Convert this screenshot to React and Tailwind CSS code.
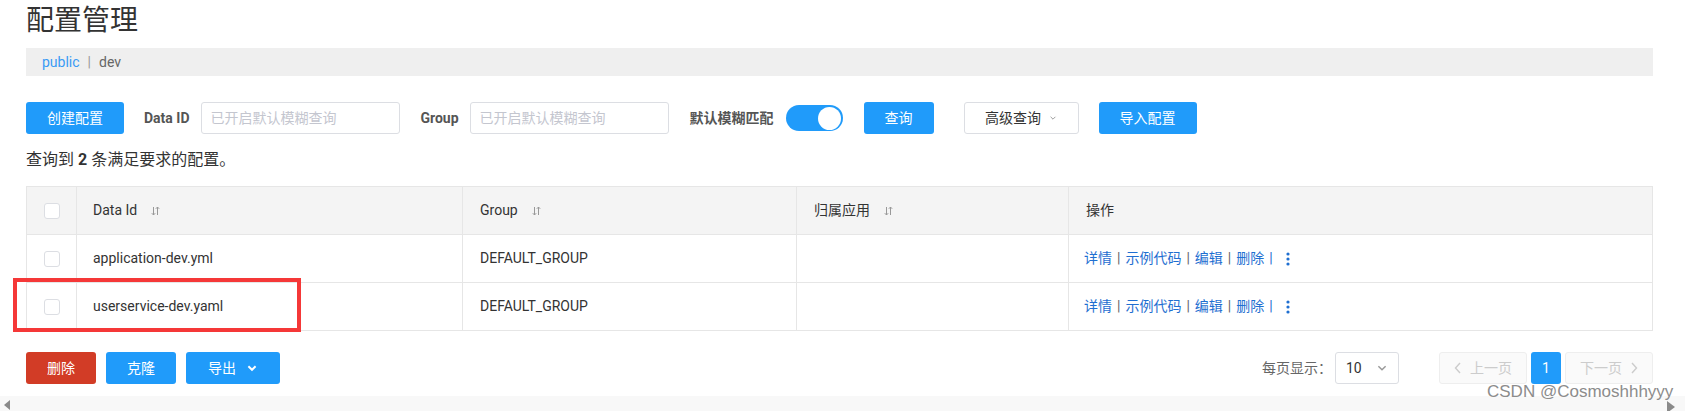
import React from "react";

const SortIcon = () => (
  <svg width="9" height="10" viewBox="0 0 9 10" className="ml-[14px] inline-block" fill="none" stroke="#999" strokeWidth="1">
    <path d="M2.5 1v8M0.8 7.2l1.7 1.8 1.7-1.8" />
    <path d="M6.5 9V1M4.8 2.8l1.7-1.8 1.7 1.8" />
  </svg>
);

const Checkbox = () => (
  <div className="mx-auto h-[16px] w-[16px] rounded-[3px] border border-[#dcdee3] bg-white" />
);

const Chevron = ({ color = "#999", size = 10, sw = 1.2 }) => (
  <svg width={size} height={size} viewBox="0 0 10 10" fill="none" stroke={color} strokeWidth={sw}>
    <path d="M2 3.5l3 3 3-3" />
  </svg>
);

const Actions = () => (
  <div className="flex items-center text-[14px] text-[#1f6fd1]">
    <span>详情</span>
    <span className="mx-[5px] text-[#666]">|</span>
    <span>示例代码</span>
    <span className="mx-[5px] text-[#666]">|</span>
    <span>编辑</span>
    <span className="mx-[5px] text-[#666]">|</span>
    <span>删除</span>
    <span className="ml-[5px] text-[#1f6fd1]">|</span>
    <svg width="4" height="14" viewBox="0 0 4 14" className="ml-[13px]" fill="#1f6fd1">
      <circle cx="2" cy="2" r="1.6" />
      <circle cx="2" cy="7" r="1.6" />
      <circle cx="2" cy="12" r="1.6" />
    </svg>
  </div>
);

export default function App() {
  const rows = ["application-dev.yml", "userservice-dev.yaml"];
  return (
    <div className="relative h-[411px] w-[1685px] overflow-hidden bg-white font-[Roboto,'Noto_Sans_CJK_SC',sans-serif] text-[#333]">
      <div className="pl-[26px] pr-[32px]">
        <h1 className="h-[42px] text-[28px] leading-[42px] font-normal text-[#333]">配置管理</h1>
        <div className="mt-[6px] flex h-[28px] items-center bg-[#efefef] pl-[16px] text-[14px]">
          <span className="text-[#3a9bf5]">public</span>
          <span className="mx-[8px] text-[#999]">|</span>
          <span className="text-[#666]">dev</span>
        </div>

        <div className="mt-[26px] flex h-[32px] items-center text-[14px]">
          <button className="h-[32px] w-[98px] rounded-[3px] bg-[#209bfa] text-white">创建配置</button>
          <span className="ml-[20px] font-bold text-[#555]">Data ID</span>
          <div className="ml-[11px] flex h-[32px] w-[199px] items-center rounded-[3px] border border-[#dcdee3] pl-[9px] text-[#c4c6cf]">已开启默认模糊查询</div>
          <span className="ml-[21px] font-bold text-[#555]">Group</span>
          <div className="ml-[11px] flex h-[32px] w-[199px] items-center rounded-[3px] border border-[#dcdee3] pl-[9px] text-[#c4c6cf]">已开启默认模糊查询</div>
          <span className="ml-[21px] font-bold text-[#555]">默认模糊匹配</span>
          <div className="ml-[12px] flex h-[26px] w-[57px] items-center justify-end rounded-full bg-[#209bfa] pr-[2px]">
            <div className="h-[23px] w-[23px] rounded-full bg-white" />
          </div>
          <button className="ml-[21px] h-[32px] w-[70px] rounded-[3px] bg-[#209bfa] text-white">查询</button>
          <button className="ml-[30px] flex h-[32px] w-[115px] items-center justify-center gap-[8px] rounded-[3px] border border-[#dcdee3] bg-white text-[#333]">
            <span>高级查询</span>
            <Chevron size={8} />
          </button>
          <button className="ml-[20px] h-[32px] w-[98px] rounded-[3px] bg-[#209bfa] text-white">导入配置</button>
        </div>

        <div className="mt-[16px] h-[20px] text-[16px] leading-[20px] text-[#333]">
          查询到 <span className="font-bold">2</span> 条满足要求的配置。
        </div>

        <table className="mt-[16px] w-full table-fixed border-collapse text-[14px]">
          <colgroup>
            <col className="w-[50px]" />
            <col className="w-[386px]" />
            <col className="w-[334px]" />
            <col className="w-[272px]" />
            <col />
          </colgroup>
          <thead>
            <tr className="h-[48px] bg-[#f4f4f4] text-left">
              <th className="border border-[#e6e6e6] font-normal"><Checkbox /></th>
              <th className="border border-[#e6e6e6] pl-[16px] font-normal">Data Id<SortIcon /></th>
              <th className="border border-[#e6e6e6] pl-[17px] font-normal">Group<SortIcon /></th>
              <th className="border border-[#e6e6e6] pl-[17px] font-normal">归属应用<SortIcon /></th>
              <th className="border border-[#e6e6e6] pl-[17px] font-normal">操作</th>
            </tr>
          </thead>
          <tbody>
            {rows.map((r) => (
              <tr key={r} className="h-[48px]">
                <td className="border border-[#e6e6e6]"><Checkbox /></td>
                <td className="border border-[#e6e6e6] pl-[16px]">{r}</td>
                <td className="border border-[#e6e6e6] pl-[17px]">DEFAULT_GROUP</td>
                <td className="border border-[#e6e6e6]"></td>
                <td className="border border-[#e6e6e6] pl-[15px]"><Actions /></td>
              </tr>
            ))}
          </tbody>
        </table>

        <div className="mt-[21px] flex h-[32px] items-center text-[14px]">
          <button className="h-[32px] w-[70px] rounded-[3px] bg-[#d23c26] text-white">删除</button>
          <button className="ml-[10px] h-[32px] w-[70px] rounded-[3px] bg-[#209bfa] text-white">克隆</button>
          <button className="ml-[10px] flex h-[32px] w-[94px] items-center justify-center gap-[10px] rounded-[3px] bg-[#209bfa] text-white">
            <span>导出</span>
            <Chevron color="#fff" size={12} sw={1.6} />
          </button>
          <div className="ml-auto flex items-center">
            <span className="text-[#666]">每页显示：</span>
            <div className="ml-[3px] flex h-[32px] w-[64px] items-center justify-between rounded-[3px] border border-[#dcdee3] pl-[10px] pr-[10px] text-[#333]">
              <span>10</span>
              <Chevron size={12} sw={1.2} />
            </div>
            <button className="ml-[40px] flex h-[32px] w-[88px] items-center justify-center gap-[8px] rounded-[3px] border border-[#eee] bg-[#fafafa] text-[#ccc]">
              <svg width="8" height="12" viewBox="0 0 8 12" fill="none" stroke="#ccc" strokeWidth="1.4"><path d="M6 1L1.5 6 6 11" /></svg>
              <span>上一页</span>
            </button>
            <button className="ml-[4px] h-[32px] w-[30px] rounded-[3px] bg-[#209bfa] text-white">1</button>
            <button className="ml-[4px] flex h-[32px] w-[88px] items-center justify-center gap-[8px] rounded-[3px] border border-[#eee] bg-[#fafafa] text-[#ccc]">
              <span>下一页</span>
              <svg width="8" height="12" viewBox="0 0 8 12" fill="none" stroke="#ccc" strokeWidth="1.4"><path d="M2 1l4.5 5L2 11" /></svg>
            </button>
          </div>
        </div>
      </div>

      <div className="mt-[12px] flex h-[17px] items-center justify-between bg-[#f8f8f8] px-[4px]">
        <svg width="6" height="10" viewBox="0 0 6 10" fill="#8a8a8a"><path d="M6 0L0 5l6 5z" /></svg>
        <svg width="8" height="12" viewBox="0 0 8 12" fill="#8a8a8a" className="mr-[6px] mt-[4px]"><path d="M0 0l8 6-8 6z" /></svg>
      </div>

      <div className="pointer-events-none absolute left-[13px] top-[278px] h-[54px] w-[288px] border-[4px] border-[#f53838]" />
      <div className="absolute left-[1487px] top-[382px] font-['Liberation_Sans',Arial,sans-serif] text-[17px] leading-[20px] text-[#8c8c8c]">CSDN @Cosmoshhhyyy</div>
    </div>
  );
}
